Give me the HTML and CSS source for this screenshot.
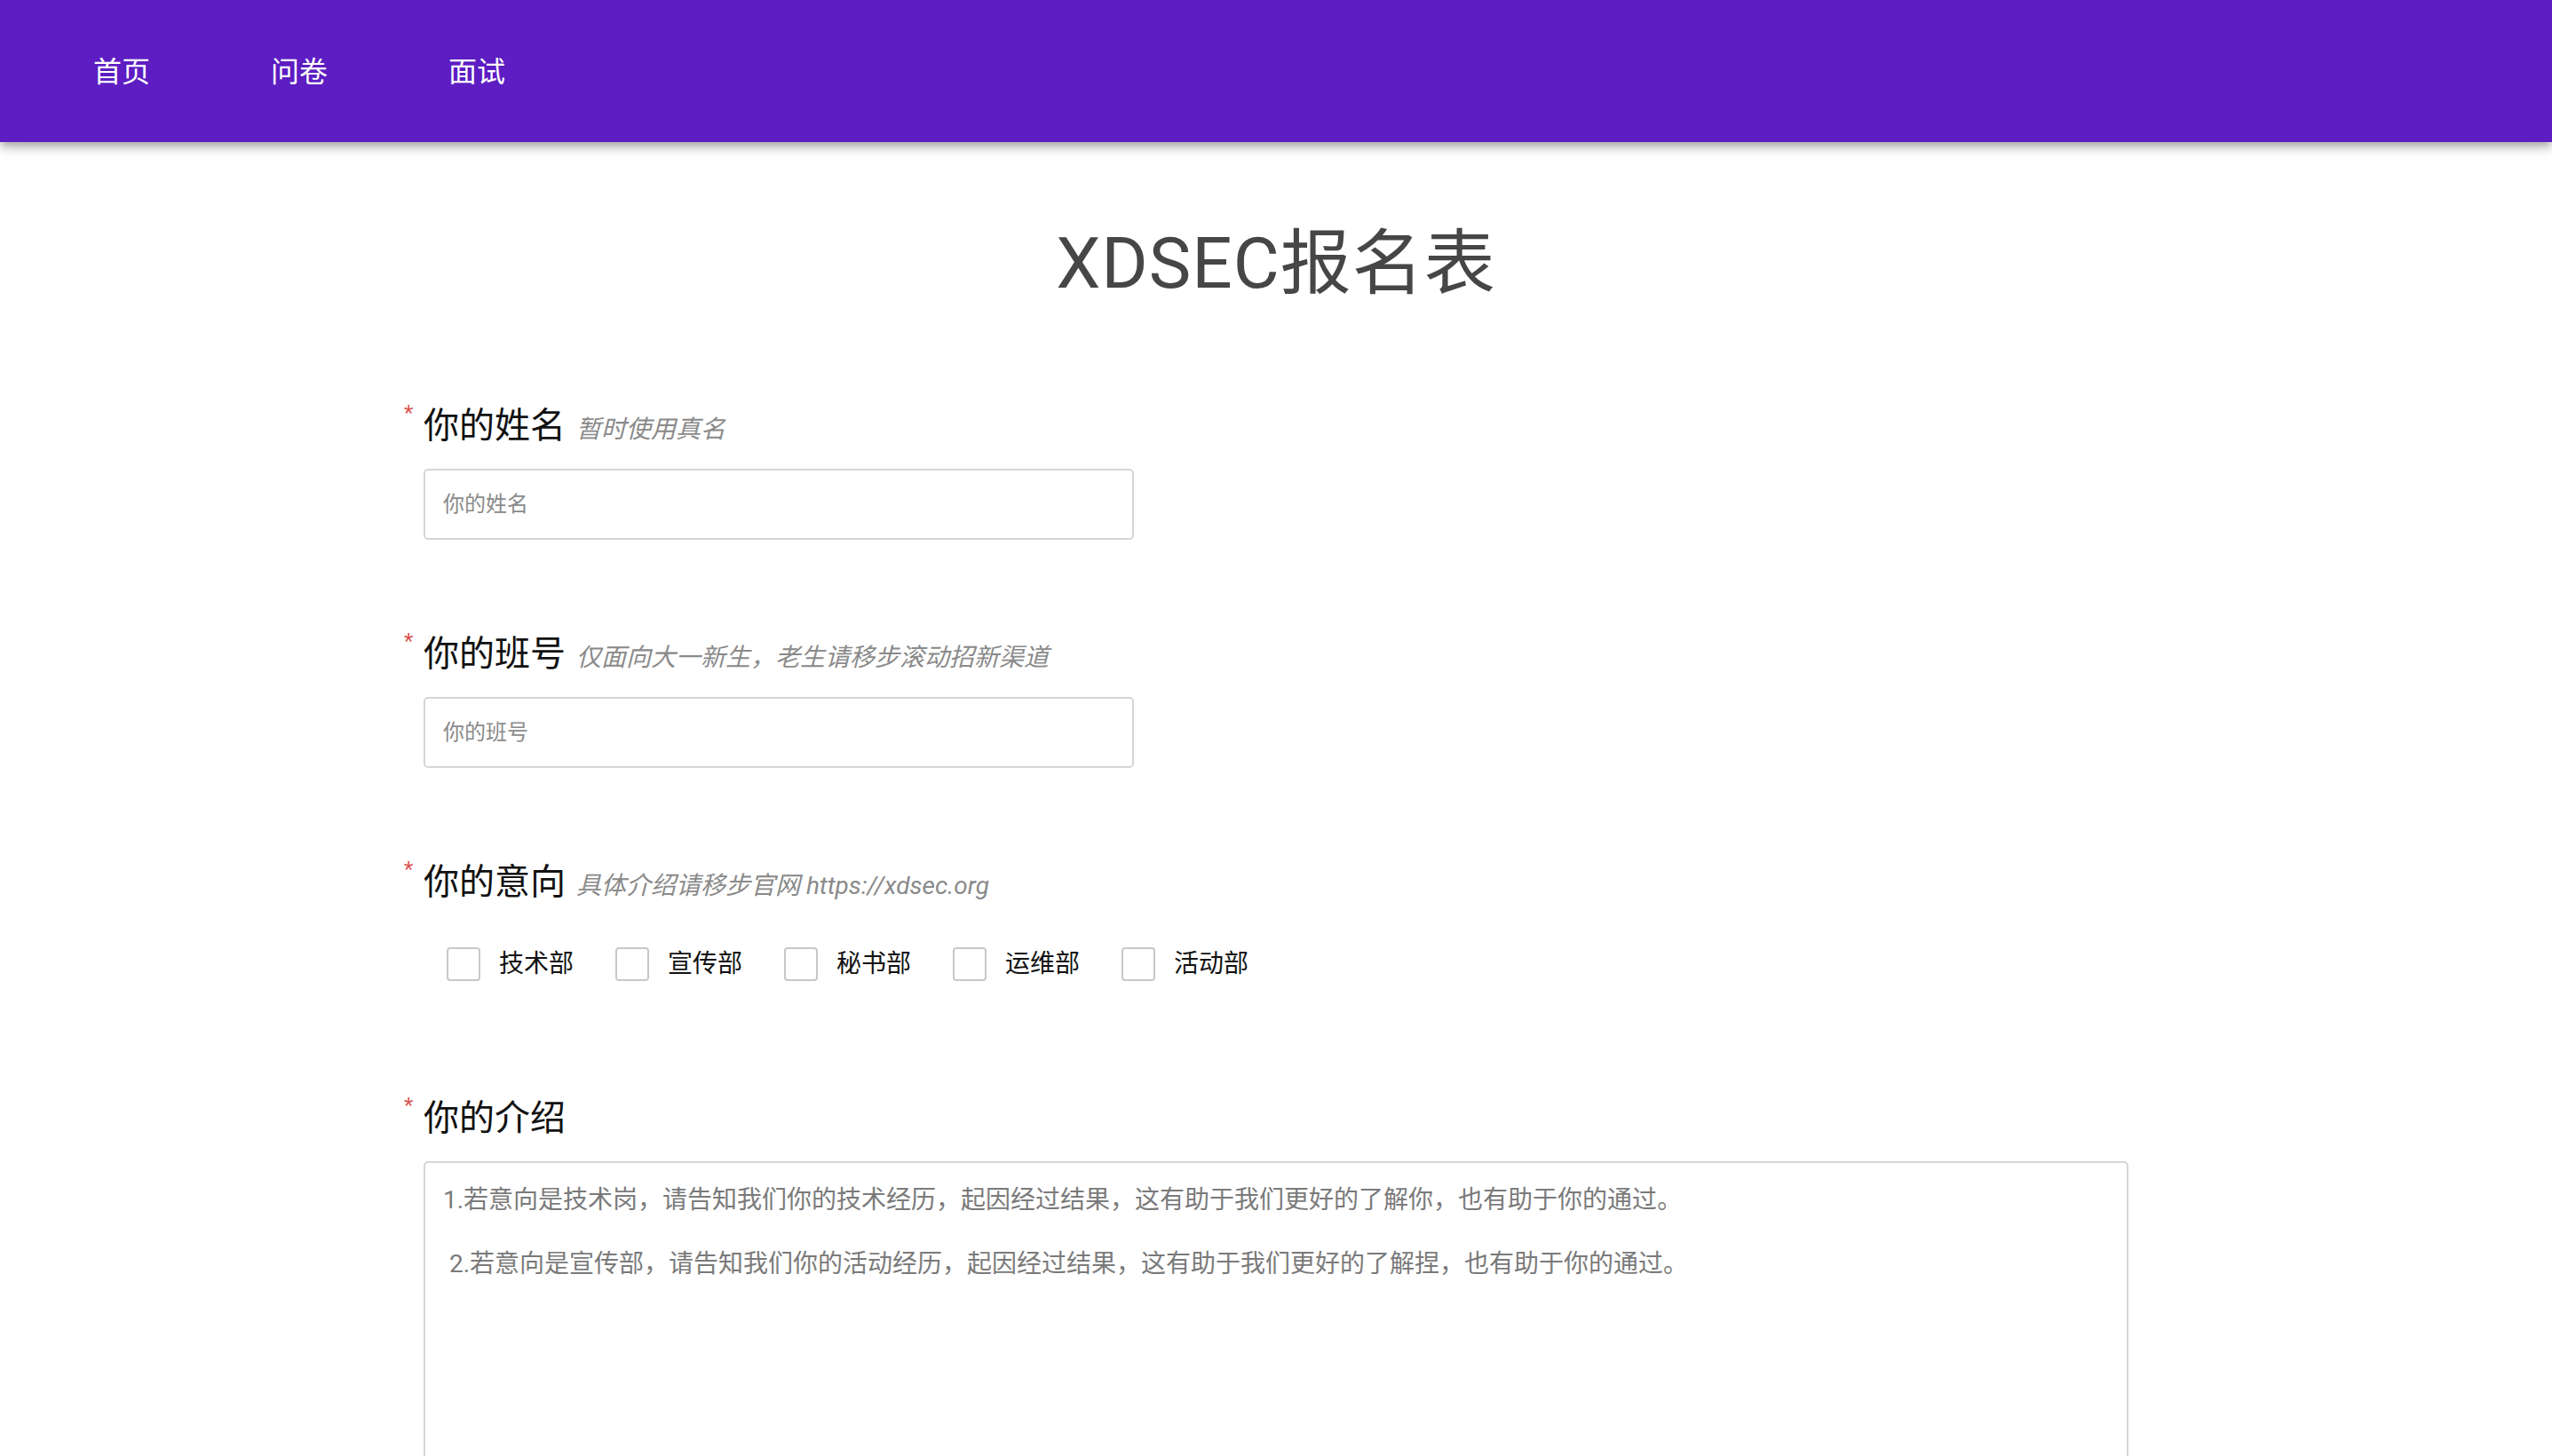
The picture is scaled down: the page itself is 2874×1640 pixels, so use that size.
FILE: index.html
```html
<!DOCTYPE html>
<html lang="zh-CN">
<head>
<meta charset="utf-8">
<title>XDSEC报名表</title>
<link rel="stylesheet" href="styles.css">
</head>
<body>
<header class="topbar">
  <nav class="nav">
    <a class="nav-link" href="#">首页</a>
    <a class="nav-link" href="#">问卷</a>
    <a class="nav-link" href="#">面试</a>
  </nav>
</header>
<main class="page">
  <h1 class="title"><span class="title-latin">XDSEC</span>报名表</h1>
  <form class="form">
    <div class="field">
      <label class="field-label required">你的姓名<span class="hint">暂时使用真名</span></label>
      <input class="text-input" type="text" placeholder="你的姓名">
    </div>
    <div class="field">
      <label class="field-label required">你的班号<span class="hint">仅面向大一新生，老生请移步滚动招新渠道</span></label>
      <input class="text-input" type="text" placeholder="你的班号">
    </div>
    <div class="field">
      <label class="field-label required">你的意向<span class="hint">具体介绍请移步官网 https://xdsec.org</span></label>
      <div class="checks">
        <label class="check"><input class="check-box" type="checkbox"><span class="check-text">技术部</span></label>
        <label class="check"><input class="check-box" type="checkbox"><span class="check-text">宣传部</span></label>
        <label class="check"><input class="check-box" type="checkbox"><span class="check-text">秘书部</span></label>
        <label class="check"><input class="check-box" type="checkbox"><span class="check-text">运维部</span></label>
        <label class="check"><input class="check-box" type="checkbox"><span class="check-text">活动部</span></label>
      </div>
    </div>
    <div class="field">
      <label class="field-label required">你的介绍</label>
      <textarea class="textarea" placeholder="1.若意向是技术岗，请告知我们你的技术经历，起因经过结果，这有助于我们更好的了解你，也有助于你的通过。&#10;&#10; 2.若意向是宣传部，请告知我们你的活动经历，起因经过结果，这有助于我们更好的了解捏，也有助于你的通过。"></textarea>
    </div>
  </form>
</main>
</body>
</html>
```
FILE: styles.css
```css
html {
  scrollbar-width: none;
}
html::-webkit-scrollbar {
  display: none;
}
body {
  margin: 0;
  background: #ffffff;
  font-family: Roboto, "Noto Sans CJK SC", sans-serif;
  color: #111111;
}

.topbar {
  height: 160px;
  background: #5d1dc2;
  box-shadow: 0 4px 8px -2px rgba(0, 0, 0, 0.2), 0 8px 10px 0 rgba(0, 0, 0, 0.14), 0 2px 20px 0 rgba(0, 0, 0, 0.12);
  position: relative;
  z-index: 1;
}
.nav {
  height: 100%;
  display: flex;
  align-items: center;
  gap: 136px;
  padding-left: 105px;
  padding-top: 2px;
  box-sizing: border-box;
}
.nav-link {
  color: #ffffff;
  text-decoration: none;
  font-size: 32px;
  line-height: 40px;
}

.page {
  padding-bottom: 40px;
}
.title {
  margin: 89px 0 0;
  text-align: center;
  font-weight: 400;
  font-size: 80px;
  line-height: 96px;
  letter-spacing: 1px;
  color: #464646;
}

.form {
  width: 1920px;
  margin: 107px auto 0;
}
.field {
  display: flex;
  flex-direction: column;
  align-items: flex-start;
  margin-bottom: 101px;
}
.field-label {
  position: relative;
  display: block;
  height: 56px;
  font-size: 40px;
  line-height: 56px;
  color: #111111;
}
.required::before {
  content: "*";
  position: absolute;
  left: -22px;
  top: -2px;
  font-size: 24px;
  line-height: 30px;
  color: #d9534f;
}
.hint {
  margin-left: 12px;
  font-size: 28px;
  line-height: 1;
  font-style: italic;
  color: #8a8a8a;
}

.text-input {
  box-sizing: border-box;
  width: 800px;
  height: 80px;
  margin-top: 20px;
  padding: 0 20px;
  border: 2px solid #d6d6d6;
  border-radius: 5px;
  font-family: Roboto, "Noto Sans CJK SC", sans-serif;
  font-size: 24px;
  color: #333333;
  outline: none;
}
.text-input::placeholder {
  color: #8a8a8a;
  opacity: 1;
}

.checks {
  display: flex;
  gap: 47px;
  margin: 45px 0 26px 26px;
}
.check {
  display: flex;
  align-items: center;
  gap: 21px;
}
.check-box {
  appearance: none;
  -webkit-appearance: none;
  box-sizing: border-box;
  width: 38px;
  height: 38px;
  margin: 0;
  border: 2px solid #c8c8c8;
  border-radius: 4px;
  background: #ffffff;
}
.check-text {
  font-size: 28px;
  line-height: 38px;
  color: #111111;
}

.textarea {
  box-sizing: border-box;
  width: 1920px;
  height: 420px;
  margin-top: 20px;
  padding: 24px 20px;
  border: 2px solid #d6d6d6;
  border-radius: 5px;
  resize: none;
  font-family: Roboto, "Noto Sans CJK SC", sans-serif;
  font-size: 28px;
  line-height: 36px;
  color: #333333;
  outline: none;
}
.textarea::placeholder {
  color: #7a7a7a;
  opacity: 1;
}
```
